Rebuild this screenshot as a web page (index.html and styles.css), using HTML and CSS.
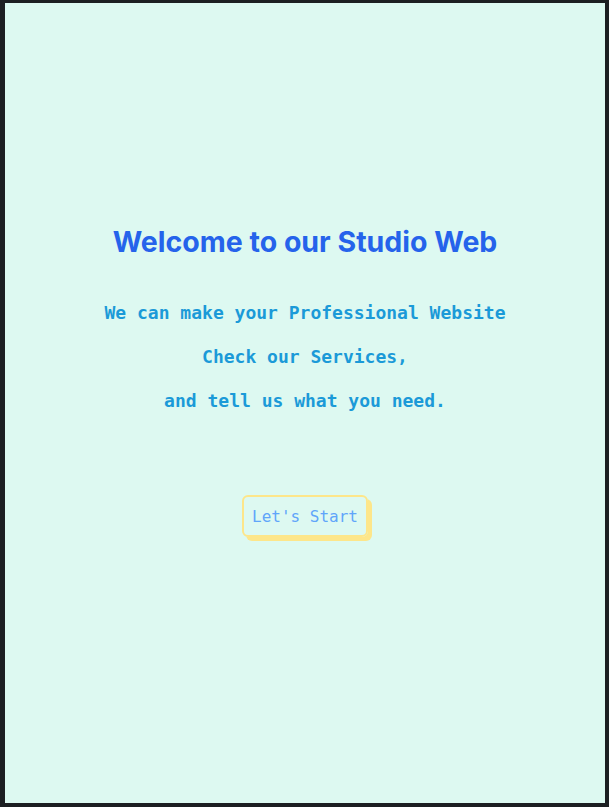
FILE: index.html
```html
<!DOCTYPE html>
<html lang="en">
<head>
<meta charset="utf-8">
<title>Studio Web</title>
<link rel="stylesheet" href="styles.css">
</head>
<body>
<main class="page">
  <h1 class="title">Welcome to our Studio Web</h1>
  <div class="intro">
    <p class="line">We can make your Professional Website</p>
    <p class="line">Check our Services,</p>
    <p class="line">and tell us what you need.</p>
  </div>
  <button class="start">Let's Start</button>
</main>
</body>
</html>
```
FILE: styles.css
```css
html, body {
  margin: 0;
  padding: 0;
}
body {
  background: #1c1f22;
  padding: 3px 4px 4px 5px;
  width: 600px;
  height: 800px;
}
.page {
  box-sizing: border-box;
  width: 600px;
  height: 800px;
  background: #ddf9f1;
  display: flex;
  flex-direction: column;
  align-items: center;
  padding-top: 221px;
}
.title {
  margin: 0;
  font-family: Inter, "Liberation Sans", sans-serif;
  font-weight: 700;
  font-size: 28.5px;
  line-height: 36px;
  letter-spacing: 0;
  color: #2563eb;
}
.intro {
  margin-top: 31px;
  text-align: center;
}
.line {
  margin: 0;
  font-family: "DejaVu Sans Mono", monospace;
  font-weight: 700;
  font-size: 18px;
  line-height: 44px;
  color: #1b9ad8;
}
.start {
  margin-top: 72px;
  box-sizing: border-box;
  height: 42px;
  padding: 0 8px;
  background: transparent;
  border: 2px solid #fde68a;
  border-radius: 6px;
  box-shadow: 4px 4px 0 #fde68a;
  font-family: "DejaVu Sans Mono", monospace;
  font-size: 16px;
  color: #60a5fa;
  cursor: pointer;
}
```
